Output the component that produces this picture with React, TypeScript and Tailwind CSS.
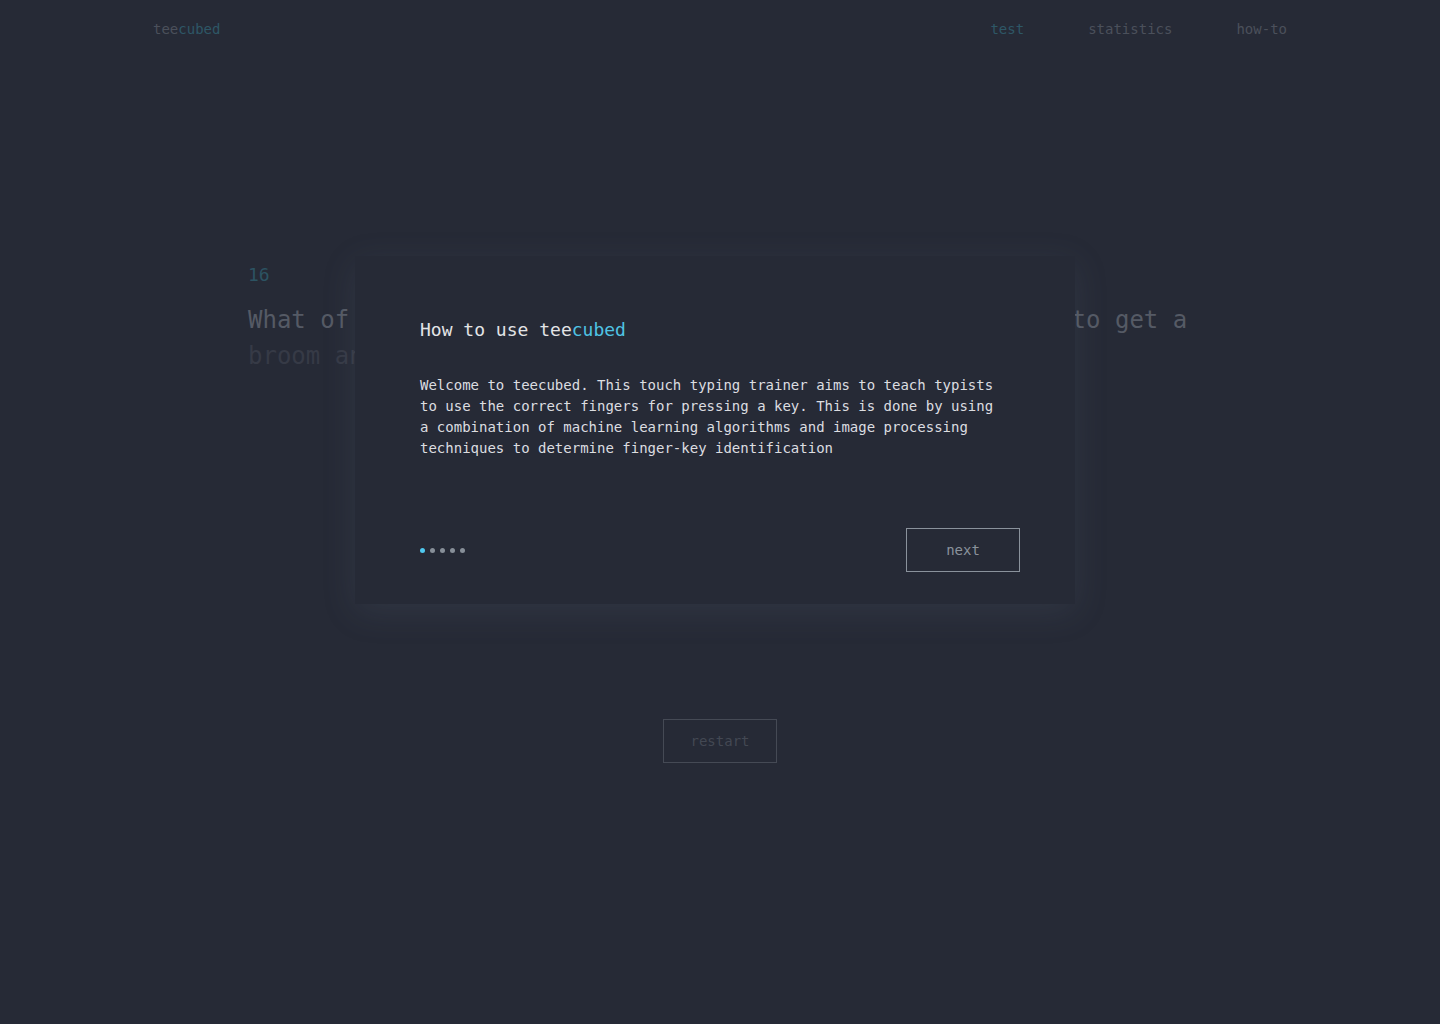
import React from 'react'

const MONO = 'font-["DejaVu_Sans_Mono","Liberation_Mono",monospace]'

const NAV = [
  { label: 'test', active: true },
  { label: 'statistics', active: false },
  { label: 'how-to', active: false },
]

function Header() {
  return (
    <header className="mx-auto flex h-[59px] w-[1134px] items-center justify-between text-[14px]">
      <div className="text-[#4b505b]">
        tee<span className="text-[#2e5766]">cubed</span>
      </div>
      <nav className="flex gap-[64px]">
        {NAV.map(item => (
          <span key={item.label} className={item.active ? 'text-[#2e5766]' : 'text-[#4b505b]'}>
            {item.label}
          </span>
        ))}
      </nav>
    </header>
  )
}

function TypingArea() {
  return (
    <section className="mx-auto mt-[202px] w-[944px]">
      <div className="text-[18px] leading-[28px] text-[#2c5362]">16</div>
      <p className="mt-[13px] text-[24px] leading-[36px]">
        <span className="text-[#555a65]">What of the times when they went to the shops and wanted to get a</span>{' '}
        <span className="text-[#363a46]">broom and a mop for the kitchen floor</span>
      </p>
      <div className="mt-[345px] flex justify-center">
        <button className="h-[44px] w-[114px] border border-[#454a55] text-[14px] text-[#434853]">
          restart
        </button>
      </div>
    </section>
  )
}

function HowToModal() {
  const dots = [true, false, false, false, false]
  return (
    <div className="absolute left-[355px] top-[256px] flex h-[348px] w-[720px] flex-col bg-[#262a36] pb-[32px] pl-[65px] pr-[55px] pt-[60px] shadow-[0_8px_32px_rgba(110,118,138,0.15)]">
      <h2 className="text-[18px] leading-[28px] text-[#e3e4e6]">
        How to use tee<span className="text-[#4fc3e3]">cubed</span>
      </h2>
      <p className="mt-[31px] w-[580px] text-[14px] leading-[21px] text-[#dcdde0]">
        Welcome to teecubed. This touch typing trainer aims to teach typists to use the correct fingers for pressing a key. This is done by using a combination of machine learning algorithms and image processing techniques to determine finger-key identification
      </p>
      <div className="mt-auto flex items-center justify-between">
        <div className="flex gap-[5px]">
          {dots.map((on, i) => (
            <span
              key={i}
              className={'h-[5px] w-[5px] rounded-full ' + (on ? 'bg-[#4fc8ef]' : 'bg-[#878f99]')}
            />
          ))}
        </div>
        <button className="h-[44px] w-[114px] border border-[#8a929c] text-[14px] text-[#8a929c]">
          next
        </button>
      </div>
    </div>
  )
}

export default function App() {
  return (
    <div className={'relative min-h-[1024px] w-full overflow-hidden bg-[#262a36] ' + MONO}>
      <Header />
      <TypingArea />
      <HowToModal />
    </div>
  )
}
